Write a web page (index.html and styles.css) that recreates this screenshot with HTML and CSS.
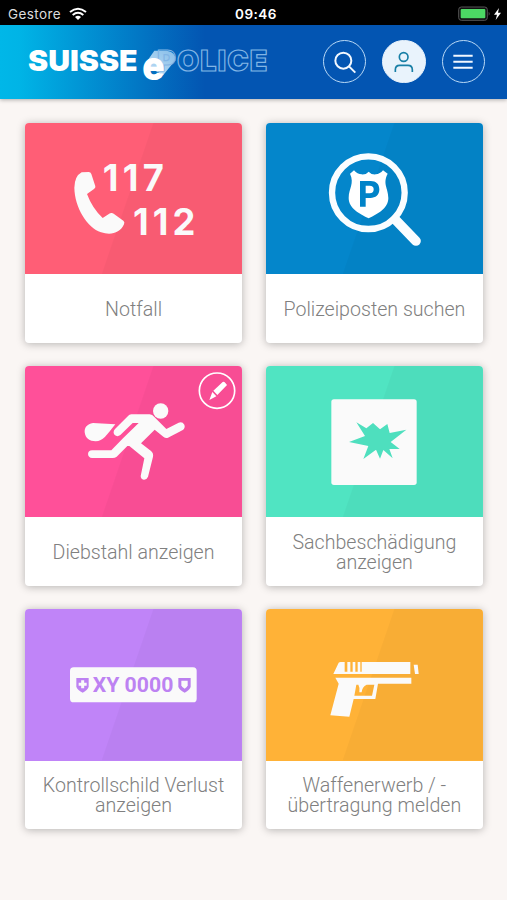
FILE: index.html
```html
<!DOCTYPE html>
<html lang="de">
<head>
<meta charset="utf-8">
<meta name="viewport" content="width=device-width, initial-scale=1">
<title>Suisse ePolice</title>
<link rel="stylesheet" href="styles.css">
</head>
<body>
<div class="status">
  <div class="carrier">Gestore
    <svg width="18" height="14" viewBox="0 0 54 42"><g fill="none" stroke="#fff" stroke-width="6"><path d="M3 15Q27-5 51 15"/><path d="M11 24Q27 11 43 24"/></g><path d="M18 30Q27 23 36 30L27 39Z" fill="#fff"/></svg>
  </div>
  <time class="clock">09:46</time>
  <svg class="battery" width="46" height="16" viewBox="0 0 138 48"><rect x="8" y="3" width="86" height="40" rx="8" fill="#111" stroke="#555" stroke-width="3"/><rect x="14" y="9" width="74" height="28" rx="3" fill="#4cd964"/><path d="M98 17Q104 23 98 29Z" fill="#555"/><path d="M129 6L114 26H123L119 42L135 20H126Z" fill="#fff"/></svg>
</div>
<header class="header">
  <svg class="logo" width="245" height="42" viewBox="75 135 735 126">
    <defs><linearGradient id="trail" x1="0" y1="1" x2="1" y2="0"><stop offset="0" stop-color="#e4f4ff"/><stop offset="1" stop-color="#9fcdf0"/></linearGradient></defs>
    <text class="logo-suisse" x="84" y="215" textLength="329" lengthAdjust="spacingAndGlyphs">SUISSE</text>
    <path d="M433 199L463 155H500Q528 158 526 184L490 228Z" fill="url(#trail)" opacity=".85"/>
    <text class="logo-police" x="471" y="215" textLength="331">POLICE</text>
    <text class="logo-e" x="427" y="242" textLength="67" lengthAdjust="spacingAndGlyphs">e</text>
  </svg>
  <nav class="actions">
    <a class="round"><svg width="24" height="24" viewBox="0 0 72 72"><g fill="none" stroke="#f2f8ff" stroke-width="6"><circle cx="31" cy="32" r="24"/><path d="M48 49L67 68"/></g></svg></a>
    <a class="round round-filled"><svg width="20" height="22" viewBox="0 0 60 66"><g fill="none" stroke="#187fa6" stroke-width="5"><circle cx="29" cy="18" r="13"/><path d="M4 63V56Q4 43 17 43H42Q55 43 55 56V63"/></g></svg></a>
    <a class="round"><svg width="20" height="16" viewBox="0 0 60 48"><path d="M1 5H59M1 23H59M1 41H59" stroke="#f2f8ff" stroke-width="6"/></svg></a>
  </nav>
</header>
<main class="grid">
  <article class="card">
    <svg class="art red" viewBox="31 24 650 454">
      <path class="shade" d="M416 24H681V478H261Z"/>
      <path fill="#fafafa" d="M201 172L222 171Q228 171 230 177L242 214Q243 219 238 222L217 237Q233 280 264 309L286 295Q292 292 297 296L326 317Q331 321 328 328C316 355 288 361 259 352C218 337 180 279 179 218Q180 183 201 172Z"/>
      <text class="digits" x="264" y="227" textLength="184">117</text>
      <text class="digits" x="355" y="359" textLength="187">112</text>
    </svg>
    <h2 class="label">Notfall</h2>
  </article>
  <article class="card">
    <svg class="art blue" viewBox="31 24 650 454">
      <path class="shade" d="M416 24H681V478H261Z"/>
      <circle cx="338" cy="233" r="109" fill="none" stroke="#fafdff" stroke-width="19"/>
      <path d="M419 314L481 378" stroke="#fafdff" stroke-width="29" stroke-linecap="round"/>
      <path fill="#fff" d="M283 176L295 166Q305 178 318 178Q332 179 339 170Q346 179 360 178Q373 177 382 166L396 176C380 207 398 219 398 249C398 281 365 297 339 310C313 297 279 281 279 249C279 219 297 207 283 176Z"/>
      <path fill="#0083c8" fill-rule="evenodd" d="M313 198H345C361 198 371 207 371 223C371 240 360 249 344 249H330V275H313ZM330 212V235H342Q354 235 354 223Q354 212 342 212Z"/>
    </svg>
    <h2 class="label">Polizeiposten suchen</h2>
  </article>
  <article class="card">
    <svg class="art pink" viewBox="31 24 650 454">
      <path class="shade" d="M416 24H681V478H261Z"/>
      <g fill="#fafafa">
        <circle cx="438" cy="159" r="23"/>
        <path d="M302 199L235 195C217 198 209 209 210 223C212 241 225 250 243 250C266 249 274 233 302 199Z"/>
        <path d="M350 169H405Q413 170 419 177L455 213L492 194Q503 190 509 200Q513 210 503 217L460 239Q453 242 446 236L420 215L379 256L409 279Q417 286 415 296L400 356Q396 366 387 365Q378 363 378 354L389 301L344 264H338L306 296Q301 300 294 300H232Q221 299 220 288Q221 277 232 277H290L325 241L372 195H354L317 231Q308 238 300 231Q293 223 301 213L340 174Q344 169 350 169Z"/>
      </g>
      <circle cx="607" cy="98" r="53" fill="none" stroke="#fff" stroke-width="5"/>
      <path fill="#fff" d="M596 98L624 72Q628 70 632 75L637 81L608 111ZM593 102L605 115L584 126Z"/>
    </svg>
    <h2 class="label">Diebstahl anzeigen</h2>
  </article>
  <article class="card">
    <svg class="art green" viewBox="31 24 650 454">
      <path class="shade" d="M416 24H681V478H261Z"/>
      <rect x="227" y="124" width="256" height="257" rx="8" fill="#fafafa"/>
      <path fill="#4edfbe" d="M302 193L332 211L352 195L373 214L395 198L402 225L452 215L405 252L432 273L401 273L411 301L383 276L373 302L361 275L323 303L338 264L280 252L328 234Z"/>
    </svg>
    <h2 class="label">Sachbeschädigung<br>anzeigen</h2>
  </article>
  <article class="card">
    <svg class="art purple" viewBox="31 27 650 454">
      <path class="shade" d="M416 27H681V481H261Z"/>
      <rect x="166" y="202" width="380" height="105" rx="11" fill="#fafafa"/>
      <path fill="#bd82f2" d="M185 234H222V260Q220 269 204 278Q187 269 185 260Z"/>
      <path d="M204 241V265M192 253H216" stroke="#fafafa" stroke-width="9"/>
      <path fill="#bb80ef" d="M491 234H528V260Q526 269 510 278Q493 269 491 260Z"/>
      <path fill="#fafafa" d="M500 242H519V256Q518 262 510 266Q501 262 500 256Z"/>
      <text class="plate" x="234" y="275" textLength="242" lengthAdjust="spacingAndGlyphs">XY 0000</text>
    </svg>
    <h2 class="label">Kontrollschild Verlust<br>anzeigen</h2>
  </article>
  <article class="card">
    <svg class="art orange" viewBox="31 27 650 454">
      <path class="shade" d="M416 27H681V481H261Z"/>
      <g fill="#fafafa">
        <path d="M249 188Q251 186 255 186H267V215H275V186H284V215H291V186H299V215H306V186H314V215H318V186H464V222H233ZM474 194H486L489 222H478Z"/>
        <path fill-rule="evenodd" d="M239 233H467V251H367L359 297H294L281 350L224 346L249 251ZM302 254L296 287H349L356 254H333Q319 261 318 277H311Q314 265 308 254Z"/>
      </g>
    </svg>
    <h2 class="label">Waffenerwerb / -<br>übertragung melden</h2>
  </article>
</main>
</body>
</html>
```
FILE: styles.css
```css
* { box-sizing: border-box; }
body {
  margin: 0;
  min-height: 900px;
  background: #faf6f4;
  font-family: Roboto, sans-serif;
}
.status {
  display: grid;
  grid-template-columns: 1fr auto 1fr;
  align-items: center;
  height: 25px;
  padding: 2px 5px 0 8px;
  background: #000;
  color: #fff;
  font-family: Inter, sans-serif;
  font-size: 13.5px;
}
.carrier {
  display: flex;
  align-items: center;
  gap: 8px;
  color: #ddd;
  letter-spacing: .4px;
}
.clock { padding-left: 2px; font-weight: 600; letter-spacing: .5px; }
.battery { justify-self: end; }
.header {
  display: flex;
  align-items: center;
  justify-content: space-between;
  height: 73.5px;
  padding: 0 22px 0 25px;
  background: linear-gradient(90deg, #00b7e8 0, #00b4e6 20px, #0355b2 205px, #0355b2 100%);
  box-shadow: 0 1px 4px rgba(0, 0, 0, .3);
}
.logo { display: block; margin-top: 7px; overflow: visible; }
.logo text { font-family: Inter, sans-serif; font-weight: 900; }
.logo-suisse { font-size: 86px; fill: #fff; }
.logo-police { font-size: 86px; fill: none; stroke: #82b5e5; stroke-width: 3.5px; }
.logo .logo-e { font-size: 122px; fill: #fff; }
.actions { display: flex; gap: 16px; }
.round {
  display: flex;
  align-items: center;
  justify-content: center;
  width: 43.3px;
  height: 43.3px;
  border: 1.5px solid #b9d9f6;
  border-radius: 50%;
}
.round-filled { background: #e9f3fc; border-color: #e9f3fc; }
.grid {
  display: grid;
  grid-template-columns: 216.7px 216.7px;
  grid-auto-rows: 220px;
  gap: 23.1px 24.2px;
  padding: 24.5px 0 0 25.2px;
}
.card {
  display: flex;
  flex-direction: column;
  overflow: hidden;
  border-radius: 4px;
  background: #fff;
  box-shadow: 0 1px 8px rgba(0, 0, 0, .28);
}
.art { display: block; width: 100%; height: 151.4px; flex: none; }
.red { background: #ff5e76; }
.blue { background: #0486cb; }
.pink { background: #ff5099; }
.green { background: #50e4c2; }
.purple { background: #c084f8; }
.orange { background: #ffb237; }
.shade { fill: rgba(0, 0, 0, .028); }
.digits { font: bold 109px Inter, sans-serif; fill: #fafafa; }
.plate { font: bold 61px Roboto, sans-serif; fill: #bd82f2; }
.label {
  display: flex;
  flex: 1;
  align-items: center;
  justify-content: center;
  margin: 0;
  padding-top: 2px;
  color: #808080;
  font-size: 19.6px;
  font-weight: 300;
  line-height: 19.8px;
  text-align: center;
}
```
